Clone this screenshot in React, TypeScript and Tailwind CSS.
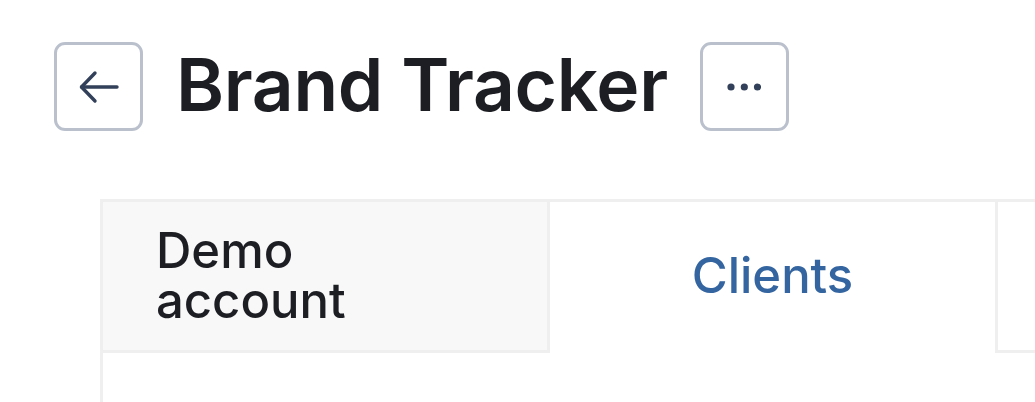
import React from "react";

const FONT = { fontFamily: "Inter, 'Noto Sans', sans-serif" };

function BackIcon() {
  return (
    <svg width="40" height="34" viewBox="0 0 40 34" fill="none" stroke="#33405a" strokeWidth="3.4" strokeLinecap="round" strokeLinejoin="round">
      <path d="M2.5 17H38" />
      <path d="M16 3 2.5 17 16 31" />
    </svg>
  );
}

function DotsIcon() {
  return (
    <svg width="34" height="10" viewBox="0 0 34 10" fill="#33405a">
      <circle cx="4" cy="5" r="3.6" />
      <circle cx="17.3" cy="5" r="3.6" />
      <circle cx="30.5" cy="5" r="3.6" />
    </svg>
  );
}

const TABS = [
  { id: "demo", label: "Demo account" },
  { id: "clients", label: "Clients" },
  { id: "more", label: "" },
];

export default function App() {
  const active = "clients";
  return (
    <div className="w-[1035px] h-[402px] overflow-hidden bg-white" style={FONT}>
      {/* header */}
      <div className="flex items-center pt-[42px] pl-[54px]">
        <button className="w-[89px] h-[89px] rounded-[11px] border-[3px] border-[#bac1cd] flex items-center justify-center">
          <BackIcon />
        </button>
        <h1 className="ml-[33px] text-[73px] leading-none font-semibold text-[#1d1e23] tracking-[-0.3px] -mt-[4px]">
          Brand Tracker
        </h1>
        <button className="ml-[32px] w-[89px] h-[89px] rounded-[11px] border-[3px] border-[#bac1cd] flex items-center justify-center">
          <DotsIcon />
        </button>
      </div>

      {/* tabs */}
      <div className="ml-[100px] mt-[68px] border-l-[3px] border-[#efefef] h-[300px]">
        <div className="flex">
          {TABS.map((t, i) => {
            const isActive = t.id === active;
            return (
              <div
                key={t.id}
                className={
                  isActive
                    ? "w-[451px] h-[154px] shrink-0 flex items-center justify-center bg-white border-t-[3px] border-x-[3px] border-[#efefef] text-[#3465a0] text-[49px] font-medium pb-[3px]"
                    : i === 0
                    ? "w-[444px] h-[154px] shrink-0 flex items-center pl-[53px] bg-[#f8f8f8] border-y-[3px] border-[#efefef] text-[#1d1e23] text-[49px] leading-[50px] font-medium"
                    : "flex-1 h-[154px] bg-white border-y-[3px] border-[#efefef]"
                }
              >
                {t.id === "demo" ? (
                  <span className="w-[220px]">{t.label}</span>
                ) : (
                  t.label
                )}
              </div>
            );
          })}
        </div>
      </div>
    </div>
  );
}
